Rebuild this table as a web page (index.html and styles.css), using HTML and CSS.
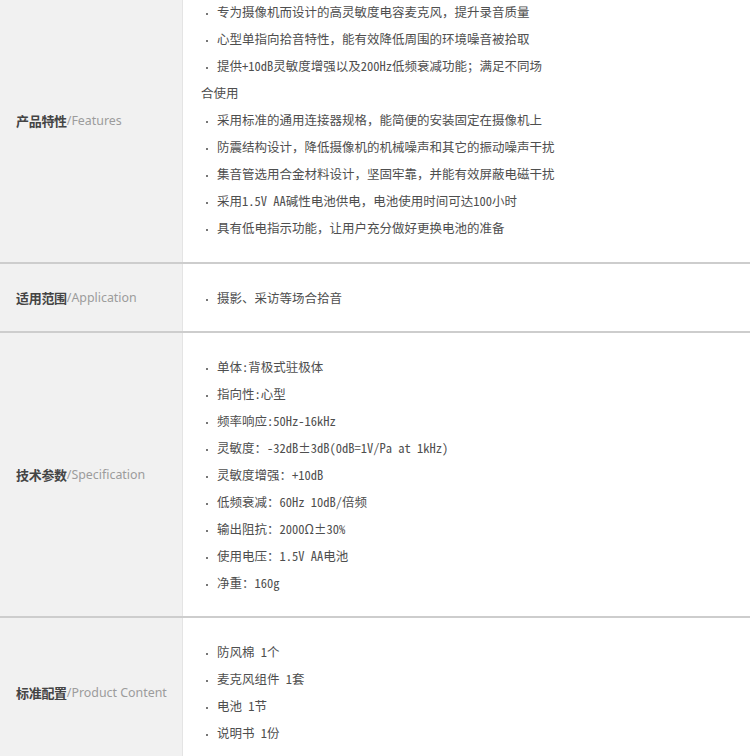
FILE: index.html
```html
<!DOCTYPE html>
<html lang="zh-CN">
<head>
<meta charset="utf-8">
<title>产品参数</title>
<link rel="stylesheet" href="styles.css">
</head>
<body>
<div class="spec">
  <div class="row">
    <div class="label"><b>产品特性</b><span>/Features</span></div>
    <div class="content">
      <p><i class="dot"></i>专为摄像机而设计的高灵敏度电容麦克风，提升录音质量</p>
      <p><i class="dot"></i>心型单指向拾音特性，能有效降低周围的环境噪音被拾取</p>
      <p><i class="dot"></i>提供+10dB灵敏度增强以及200Hz低频衰减功能；满足不同场</p>
      <p>合使用</p>
      <p><i class="dot"></i>采用标准的通用连接器规格，能简便的安装固定在摄像机上</p>
      <p><i class="dot"></i>防震结构设计，降低摄像机的机械噪声和其它的振动噪声干扰</p>
      <p><i class="dot"></i>集音管选用合金材料设计，坚固牢靠，并能有效屏蔽电磁干扰</p>
      <p><i class="dot"></i>采用1.5V AA碱性电池供电，电池使用时间可达100小时</p>
      <p><i class="dot"></i>具有低电指示功能，让用户充分做好更换电池的准备</p>
    </div>
  </div>
  <div class="row">
    <div class="label"><b>适用范围</b><span>/Application</span></div>
    <div class="content">
      <p><i class="dot"></i>摄影、采访等场合拾音</p>
    </div>
  </div>
  <div class="row">
    <div class="label"><b>技术参数</b><span>/Specification</span></div>
    <div class="content">
      <p><i class="dot"></i>单体:背极式驻极体</p>
      <p><i class="dot"></i>指向性:心型</p>
      <p><i class="dot"></i>频率响应:50Hz-16kHz</p>
      <p><i class="dot"></i>灵敏度：-32dB±3dB(0dB=1V/Pa at 1kHz)</p>
      <p><i class="dot"></i>灵敏度增强：+10dB</p>
      <p><i class="dot"></i>低频衰减：60Hz 10dB/倍频</p>
      <p><i class="dot"></i>输出阻抗：2000Ω±30%</p>
      <p><i class="dot"></i>使用电压：1.5V AA电池</p>
      <p><i class="dot"></i>净重：160g</p>
    </div>
  </div>
  <div class="row">
    <div class="label"><b>标准配置</b><span>/Product Content</span></div>
    <div class="content">
      <p><i class="dot"></i>防风棉 1个</p>
      <p><i class="dot"></i>麦克风组件 1套</p>
      <p><i class="dot"></i>电池 1节</p>
      <p><i class="dot"></i>说明书 1份</p>
    </div>
  </div>
</div>
</body>
</html>
```

FILE: styles.css
```css
html, body {
  margin: 0;
  padding: 0;
  background: #ffffff;
}

body {
  overflow: hidden;
}

.spec {
  margin-top: -22px;
  width: 750px;
}

.row {
  display: grid;
  grid-template-columns: 183px 1fr;
  border-bottom: 2px solid #cdcdcd;
}

.row:first-child .content {
  padding-bottom: 21px;
}

.label {
  display: flex;
  align-items: center;
  padding-left: 16px;
  background: #f1f1f1;
  border-right: 1px solid #e4e4e4;
  font-family: "Noto Sans", "Noto Sans CJK SC", sans-serif;
  font-size: 12.4px;
  white-space: nowrap;
}

.label b {
  font-family: "Noto Sans CJK SC", sans-serif;
  font-size: 13px;
  font-weight: 700;
  color: #444444;
  letter-spacing: -0.3px;
}

.label span {
  color: #9c9c9c;
}

.content {
  padding: 20px 0 20px 18px;
  font-family: "Noto Sans Mono CJK SC", "Noto Sans CJK SC", sans-serif;
  font-size: 12.5px;
  line-height: 27px;
  color: #4e4e4e;
}

.content p {
  margin: 0;
  white-space: nowrap;
}

.dot {
  display: inline-block;
  width: 2px;
  height: 2px;
  background: #777777;
  vertical-align: middle;
  margin: 0 9px 0 5px;
}
```
